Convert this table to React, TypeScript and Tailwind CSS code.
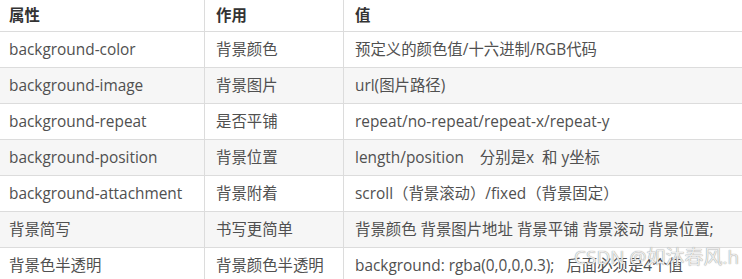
const rows: [string, string, string][] = [
  ["background-color", "背景颜色", "预定义的颜色值/十六进制/RGB代码"],
  ["background-image", "背景图片", "url(图片路径)"],
  ["background-repeat", "是否平铺", "repeat/no-repeat/repeat-x/repeat-y"],
  ["background-position", "背景位置", "length/position    分别是x  和 y坐标"],
  ["background-attachment", "背景附着", "scroll（背景滚动）/fixed（背景固定）"],
  ["背景简写", "书写更简单", "背景颜色 背景图片地址 背景平铺 背景滚动 背景位置;"],
  ["背景色半透明", "背景颜色半透明", "background: rgba(0,0,0,0.3);   后面必须是4个值"],
];

export default function App() {
  return (
    <div
      className="relative h-[279px] w-[742px] overflow-hidden bg-white text-[15.4px] text-[#505050]"
      style={{ fontFamily: '"Open Sans", "Noto Sans CJK SC", sans-serif' }}
    >
      <div className="grid grid-cols-[205px_139px_1fr] h-8 border-b border-[#dcdcdc] font-bold text-[#333]">
        <div className="flex items-center border-r border-[#dcdcdc] pl-[9px]">属性</div>
        <div className="flex items-center border-r border-[#dcdcdc] pl-[11px]">作用</div>
        <div className="flex items-center pl-[11px]">值</div>
      </div>
      {rows.map((r, i) => (
        <div
          key={i}
          className={`grid grid-cols-[205px_139px_1fr] h-[36px] border-b border-[#dcdcdc] ${
            i % 2 === 1 ? "bg-[#f6f6f6]" : "bg-white"
          }`}
        >
          <div className="flex items-center border-r border-[#dcdcdc] pl-[9px] whitespace-pre">{r[0]}</div>
          <div className="flex items-center border-r border-[#dcdcdc] pl-[11px] whitespace-pre">{r[1]}</div>
          <div className="flex items-center pl-[11px] whitespace-pre">{r[2]}</div>
        </div>
      ))}
      <div
        className="absolute left-[574px] top-[243px] text-[19px] text-[#ececec] whitespace-pre"
        style={{ textShadow: "0 0 1px #777" }}
      >
        CSDN @如沐春风.h
      </div>
    </div>
  );
}
